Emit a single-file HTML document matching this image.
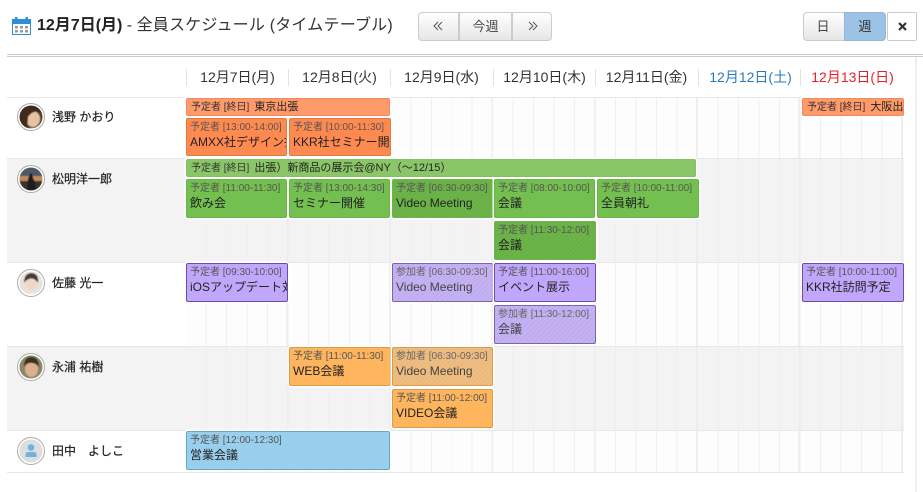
<!DOCTYPE html>
<html><head><meta charset="utf-8">
<style>
html,body{margin:0;padding:0;background:#fff}
body{width:923px;height:492px;position:relative;overflow:hidden;font-family:"Liberation Sans","Noto Sans CJK JP",sans-serif;color:#222}
.a,.e,.r,.g,.d,.b,.n,svg{position:absolute}
.r{left:7px;width:897px}
.g{left:186px;width:717px;background-image:repeating-linear-gradient(90deg,transparent 0,transparent 100.6px,#ededed 100.6px,#ededed 102.4px),repeating-linear-gradient(90deg,transparent 0,transparent 19.5px,#efefef 19.5px,#efefef 20.48px)}
.g.w{background-color:#fdfdfd}
.d{top:69px;height:17px;width:102px;border-left:1px solid #e3e3e3;text-align:center;font-size:14px;line-height:17px;color:#333;white-space:nowrap;box-sizing:border-box}
.b{top:12px;height:29px;box-sizing:border-box;border:1px solid #ccc;background:linear-gradient(#fff,#e6e6e6);font-size:13px;line-height:27px;text-align:center;color:#444}
.n{left:52px;font-size:12px;line-height:16px;color:#222;white-space:nowrap;-webkit-text-stroke:.2px #222}
.e{box-sizing:border-box;border:1px solid;border-radius:2px;overflow:hidden;white-space:nowrap;padding:2px 0 0 3px;font-size:12px;line-height:16px;color:#222;box-shadow:0 0 0 1.5px #fff}
.e small{display:block;font-size:10px;line-height:13px;color:#555}
.e.all{font-size:11px;line-height:13px;padding:2px 0 0 4px;color:#222}
.e.all small{display:inline;font-size:10px;color:#333;margin-right:5px;line-height:13px}
.o{background:#ff8a50;border-color:#e07a45}
.oa{background:#ff9a6b;border-color:#f08a5c}
.gr{background:#73bf4f;border-color:#6ab547}
.ga{background:#8ac668;border-color:#84c062}
.p{background:#c1a7fb;border-color:#6a4fa3}
.y{background:#ffb55e;border-color:#d99a4a}
.bl{background:#98cfec;border-color:#6ca6c6}
.h{background-image:repeating-linear-gradient(135deg,rgba(0,0,0,.04) 0,rgba(0,0,0,.04) 1px,transparent 1px,transparent 3.5px)}
.pa{color:#444}.pa small{color:#666}
.p.pa{background-color:#c5b1f3;border-color:#7a64ae}
.gr.h{background-color:#6cb449}
</style></head>
<body>
<svg style="left:12px;top:17px" width="20" height="18" viewBox="0 0 20 18"><rect x="0.5" y="2.5" width="18" height="15" fill="#fff" stroke="#2a8fd8"/><rect x="0" y="2" width="19" height="5" fill="#2a8fd8"/><rect x="3" y="0" width="2.5" height="4" fill="#2a8fd8"/><rect x="13.5" y="0" width="2.5" height="4" fill="#2a8fd8"/><g fill="#9a9a9a"><rect x="3" y="9" width="3" height="2.5"/><rect x="8" y="9" width="3" height="2.5"/><rect x="13" y="9" width="3" height="2.5"/><rect x="3" y="13" width="3" height="2.5"/><rect x="8" y="13" width="3" height="2.5"/><rect x="13" y="13" width="3" height="2.5"/></g></svg>
<div class="a" style="left:37px;top:15px;font-size:16px;line-height:22px;white-space:nowrap;color:#333"><b style="color:#222">12月7日(月)</b> - <span style="letter-spacing:.2px">全員スケジュール (タイムテーブル)</span></div>

<div class="b" style="left:418px;width:41px;border-radius:4px 0 0 4px"></div>
<div class="b" style="left:458px;width:55px;border-left-width:2px;border-right-width:2px">今週</div>
<div class="b" style="left:512px;width:40px;border-radius:0 4px 4px 0"></div>
<svg style="left:432px;top:21px" width="12" height="10" viewBox="0 0 12 10" fill="none" stroke="#555" stroke-width="1"><path d="M6 1L2 5L6 9M10 1L6 5L10 9"/></svg>
<svg style="left:527px;top:21px" width="12" height="10" viewBox="0 0 12 10" fill="none" stroke="#555" stroke-width="1"><path d="M2 1L6 5L2 9M6 1L10 5L6 9"/></svg>
<div class="b" style="left:803px;width:42px;border-radius:4px 0 0 4px;padding-right:2px">日</div>
<div class="b" style="left:844px;width:42px;border-radius:0 4px 4px 0;background:#9cc3e6;border-color:#8fb8dc;color:#333">週</div>
<div class="b" style="left:887px;width:30px;border-radius:2px;background:#fff"></div>
<svg style="left:898px;top:22px" width="9" height="9" viewBox="0 0 9 9" fill="none" stroke="#333" stroke-width="2.200"><path d="M1 1L8 8M8 1L1 8"/></svg>

<div class="a" style="left:7px;top:54px;width:916px;height:1px;background:#ccc"></div>
<div class="a" style="left:7px;top:56px;width:916px;height:1px;background:#ccc"></div>
<div class="a" style="left:915px;top:57px;width:2px;height:435px;background:#eee"></div>

<div class="d" style="left:186px">12月7日(月)</div>
<div class="d" style="left:288px">12月8日(火)</div>
<div class="d" style="left:390px">12月9日(水)</div>
<div class="d" style="left:493px">12月10日(木)</div>
<div class="d" style="left:595px">12月11日(金)</div>
<div class="d" style="left:698px;color:#2a7bbd;padding-left:2px">12月12日(土)</div>
<div class="d" style="left:800px;color:#e8202a;padding-left:2px">12月13日(日)</div>

<div class="r" style="top:97px;height:1px;background:#e8e8e8"></div>
<div class="r" style="top:158px;height:104px;background:#f3f3f3;border-top:1px solid #e8e8e8;box-sizing:border-box"></div>
<div class="r" style="top:262px;height:1px;background:#e8e8e8"></div>
<div class="r" style="top:346px;height:84px;background:#f3f3f3;border-top:1px solid #e8e8e8;box-sizing:border-box"></div>
<div class="r" style="top:430px;height:1px;background:#e8e8e8"></div>
<div class="r" style="top:472px;height:1px;background:#e8e8e8"></div>

<div class="g w" style="top:98px;height:60px"></div>
<div class="g" style="top:159px;height:103px"></div>
<div class="g w" style="top:263px;height:83px"></div>
<div class="g" style="top:347px;height:83px"></div>
<div class="g w" style="top:431px;height:41px"></div>

<svg style="left:17px;top:103px" width="28" height="28" viewBox="0 0 28 28"><defs><clipPath id="c"><circle cx="14" cy="14" r="11.500"/></clipPath><filter id="s"><feGaussianBlur stdDeviation=".5"/></filter></defs><circle cx="14" cy="14" r="13.500" fill="#fff" stroke="#aaa"/><g clip-path="url(#c)"><g filter="url(#s)"><rect width="28" height="28" fill="#5d3f2c"/><ellipse cx="16" cy="16" rx="7" ry="8" fill="#e6c3a4"/><path d="M2 2H26V10Q16 6 11 14L10 28H2Z" fill="#3f2a1d"/><path d="M8 28Q15 22 26 28Z" fill="#d9b79c"/></g></g></svg>
<svg style="left:17px;top:165px" width="28" height="28" viewBox="0 0 28 28"><defs><clipPath id="c2"><circle cx="14" cy="14" r="11.500"/></clipPath></defs><circle cx="14" cy="14" r="13.500" fill="#fff" stroke="#aaa"/><g clip-path="url(#c2)"><g filter="url(#s)"><rect width="28" height="12" fill="#4f5866"/><rect y="11" width="28" height="5" fill="#c08a5c"/><rect y="16" width="28" height="12" fill="#3d312e"/><path d="M10 26L11 14L13 9L15 8L16 13L18 17L19 26Z" fill="#1e1c22"/></g></g></svg>
<svg style="left:17px;top:269px" width="28" height="28" viewBox="0 0 28 28"><defs><clipPath id="c3"><circle cx="14" cy="14" r="11.500"/></clipPath></defs><circle cx="14" cy="14" r="13.500" fill="#fff" stroke="#aaa"/><g clip-path="url(#c3)"><g filter="url(#s)"><rect width="28" height="28" fill="#e6e2de"/><ellipse cx="14" cy="15" rx="5.500" ry="6.500" fill="#efd8c8"/><path d="M7 14Q7 4 15 4Q22 5 21 14Q17 8 12 10Q9 11 7 14Z" fill="#4a3a34"/><path d="M5 28Q14 21 23 28Z" fill="#f5f5f5"/></g></g></svg>
<svg style="left:17px;top:353px" width="28" height="28" viewBox="0 0 28 28"><defs><clipPath id="c4"><circle cx="14" cy="14" r="11.500"/></clipPath></defs><circle cx="14" cy="14" r="13.500" fill="#fff" stroke="#aaa"/><g clip-path="url(#c4)"><g filter="url(#s)"><rect width="28" height="28" fill="#8a8668"/><ellipse cx="14.500" cy="16" rx="6.500" ry="8" fill="#dcb08e"/><path d="M7 14Q7 4 14 4Q22 4 22 14Q18 9 12 10Q9 11 7 14Z" fill="#3a3028"/><path d="M5 28Q14 24 23 28Z" fill="#ddd"/></g></g></svg>
<svg style="left:17px;top:437px" width="28" height="28" viewBox="0 0 28 28"><circle cx="14" cy="14" r="13.500" fill="#fff" stroke="#aaa"/><circle cx="14" cy="14" r="11.500" fill="#dedede"/><circle cx="14" cy="10.500" r="3.300" fill="#6db3e0"/><path d="M8.500 20V18Q8.500 15 11 15H17Q19.500 15 19.500 18V20Z" fill="#6db3e0"/></svg>

<div class="n" style="top:109px">浅野 かおり</div>
<div class="n" style="top:171px">松明洋一郎</div>
<div class="n" style="top:275px">佐藤 光一</div>
<div class="n" style="top:359px">永浦 祐樹</div>
<div class="n" style="top:443px">田中　よしこ</div>

<div class="e all oa" style="left:186px;top:98px;width:204px;height:18px"><small>予定者 [終日]</small>東京出張</div>
<div class="e all oa" style="left:802px;top:98px;width:102px;height:18px"><small>予定者 [終日]</small>大阪出張</div>
<div class="e o" style="left:186px;top:118px;width:101px;height:38px"><small>予定者 [13:00-14:00]</small>AMXX社デザイン打合せ</div>
<div class="e o" style="left:289px;top:118px;width:102px;height:38px"><small>予定者 [10:00-11:30]</small>KKR社セミナー開催</div>

<div class="e all ga" style="left:186px;top:159px;width:510px;height:18px"><small>予定者 [終日]</small>出張）新商品の展示会@NY（～12/15）</div>
<div class="e gr" style="left:186px;top:179px;width:101px;height:39px"><small>予定者 [11:00-11:30]</small>飲み会</div>
<div class="e gr" style="left:289px;top:179px;width:101px;height:39px"><small>予定者 [13:00-14:30]</small>セミナー開催</div>
<div class="e gr h" style="left:392px;top:179px;width:101px;height:39px"><small>予定者 [06:30-09:30]</small>Video Meeting</div>
<div class="e gr" style="left:494px;top:179px;width:101px;height:39px"><small>予定者 [08:00-10:00]</small>会議</div>
<div class="e gr" style="left:597px;top:179px;width:102px;height:39px"><small>予定者 [10:00-11:00]</small>全員朝礼</div>
<div class="e gr h" style="left:494px;top:221px;width:102px;height:39px"><small>予定者 [11:30-12:00]</small>会議</div>

<div class="e p" style="left:186px;top:263px;width:102px;height:39px"><small>予定者 [09:30-10:00]</small>iOSアップデート対応</div>
<div class="e p h pa" style="left:392px;top:263px;width:101px;height:39px"><small>参加者 [06:30-09:30]</small>Video Meeting</div>
<div class="e p" style="left:494px;top:263px;width:102px;height:39px"><small>予定者 [11:00-16:00]</small>イベント展示</div>
<div class="e p h pa" style="left:494px;top:305px;width:102px;height:39px"><small>参加者 [11:30-12:00]</small>会議</div>
<div class="e p" style="left:802px;top:263px;width:102px;height:39px"><small>予定者 [10:00-11:00]</small>KKR社訪問予定</div>

<div class="e y" style="left:289px;top:347px;width:102px;height:39px"><small>予定者 [11:00-11:30]</small>WEB会議</div>
<div class="e y h pa" style="left:392px;top:347px;width:101px;height:39px;background-color:#efbd80"><small>参加者 [06:30-09:30]</small>Video Meeting</div>
<div class="e y" style="left:392px;top:389px;width:101px;height:39px"><small>予定者 [11:00-12:00]</small>VIDEO会議</div>

<div class="e bl" style="left:186px;top:431px;width:204px;height:39px"><small>予定者 [12:00-12:30]</small>営業会議</div>
</body></html>
